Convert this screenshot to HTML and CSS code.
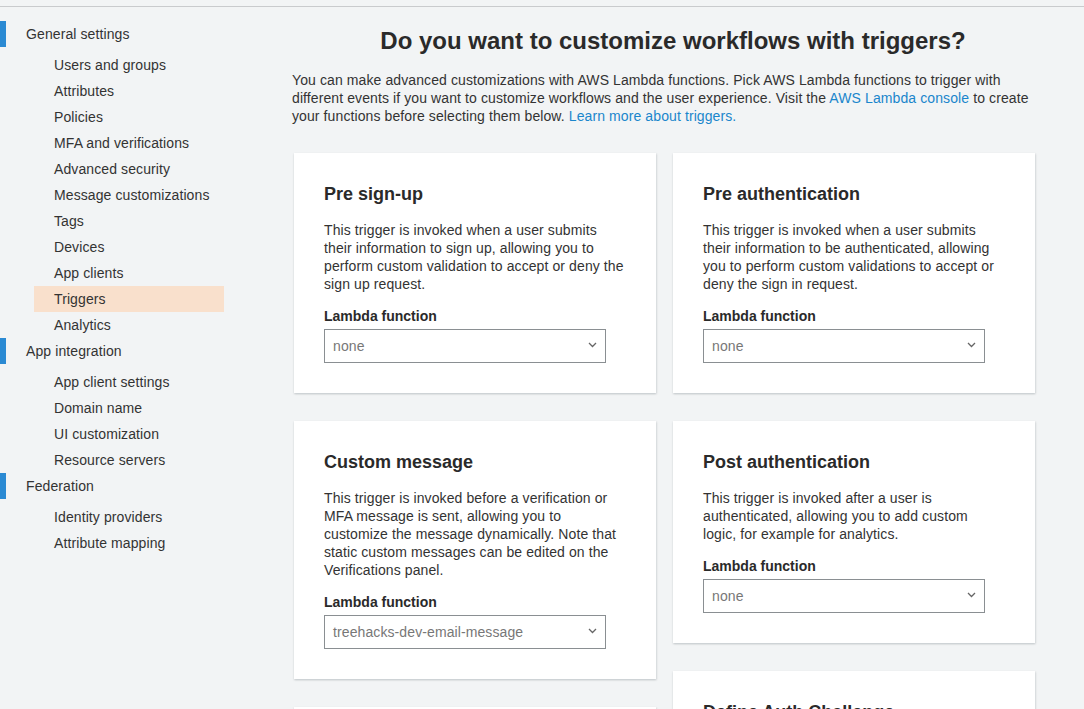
FILE: index.html
```html
<!DOCTYPE html>
<html lang="en">
<head>
<meta charset="utf-8">
<title>Triggers</title>
<link rel="stylesheet" href="styles.css">
</head>
<body>
<div class="topbar"></div>
<div class="layout">
  <nav class="sidebar">
    <div class="nav-section">General settings</div>
    <ul class="nav-list">
      <li class="nav-item">Users and groups</li>
      <li class="nav-item">Attributes</li>
      <li class="nav-item">Policies</li>
      <li class="nav-item">MFA and verifications</li>
      <li class="nav-item">Advanced security</li>
      <li class="nav-item">Message customizations</li>
      <li class="nav-item">Tags</li>
      <li class="nav-item">Devices</li>
      <li class="nav-item">App clients</li>
      <li class="nav-item active">Triggers</li>
      <li class="nav-item">Analytics</li>
    </ul>
    <div class="nav-section">App integration</div>
    <ul class="nav-list">
      <li class="nav-item">App client settings</li>
      <li class="nav-item">Domain name</li>
      <li class="nav-item">UI customization</li>
      <li class="nav-item">Resource servers</li>
    </ul>
    <div class="nav-section">Federation</div>
    <ul class="nav-list">
      <li class="nav-item">Identity providers</li>
      <li class="nav-item">Attribute mapping</li>
    </ul>
  </nav>
  <main class="main">
    <h1 class="title">Do you want to customize workflows with triggers?</h1>
    <p class="intro">You can make advanced customizations with AWS Lambda functions. Pick AWS Lambda functions to trigger with different events if you want to customize workflows and the user experience. Visit the <a href="#">AWS Lambda console</a> to create your functions before selecting them below. <a href="#">Learn more about triggers.</a></p>
    <div class="columns">
      <div class="column">
        <section class="card">
          <h2 class="card-title">Pre sign-up</h2>
          <p class="card-desc">This trigger is invoked when a user submits their information to sign up, allowing you to perform custom validation to accept or deny the sign up request.</p>
          <div class="field-label">Lambda function</div>
          <div class="select"><span>none</span><svg class="chev" width="9" height="6" viewBox="0 0 9 6"><path d="M1 1l3.5 3.5L8 1" fill="none" stroke="#666" stroke-width="1.3"/></svg></div>
        </section>
        <section class="card">
          <h2 class="card-title">Custom message</h2>
          <p class="card-desc">This trigger is invoked before a verification or MFA message is sent, allowing you to customize the message dynamically. Note that static custom messages can be edited on the Verifications panel.</p>
          <div class="field-label">Lambda function</div>
          <div class="select"><span>treehacks-dev-email-message</span><svg class="chev" width="9" height="6" viewBox="0 0 9 6"><path d="M1 1l3.5 3.5L8 1" fill="none" stroke="#666" stroke-width="1.3"/></svg></div>
        </section>
        <section class="card">
          <h2 class="card-title">Post confirmation</h2>
          <p class="card-desc">This trigger is invoked after a user is confirmed, allowing you to send custom messages or to add custom logic, for example for analytics.</p>
          <div class="field-label">Lambda function</div>
          <div class="select"><span>none</span><svg class="chev" width="9" height="6" viewBox="0 0 9 6"><path d="M1 1l3.5 3.5L8 1" fill="none" stroke="#666" stroke-width="1.3"/></svg></div>
        </section>
      </div>
      <div class="column">
        <section class="card">
          <h2 class="card-title">Pre authentication</h2>
          <p class="card-desc">This trigger is invoked when a user submits their information to be authenticated, allowing you to perform custom validations to accept or deny the sign in request.</p>
          <div class="field-label">Lambda function</div>
          <div class="select"><span>none</span><svg class="chev" width="9" height="6" viewBox="0 0 9 6"><path d="M1 1l3.5 3.5L8 1" fill="none" stroke="#666" stroke-width="1.3"/></svg></div>
        </section>
        <section class="card">
          <h2 class="card-title">Post authentication</h2>
          <p class="card-desc">This trigger is invoked after a user is authenticated, allowing you to add custom logic, for example for analytics.</p>
          <div class="field-label">Lambda function</div>
          <div class="select"><span>none</span><svg class="chev" width="9" height="6" viewBox="0 0 9 6"><path d="M1 1l3.5 3.5L8 1" fill="none" stroke="#666" stroke-width="1.3"/></svg></div>
        </section>
        <section class="card">
          <h2 class="card-title">Define Auth Challenge</h2>
          <p class="card-desc">This trigger is invoked to initiate the custom authentication flow.</p>
          <div class="field-label">Lambda function</div>
          <div class="select"><span>none</span><svg class="chev" width="9" height="6" viewBox="0 0 9 6"><path d="M1 1l3.5 3.5L8 1" fill="none" stroke="#666" stroke-width="1.3"/></svg></div>
        </section>
      </div>
    </div>
  </main>
</div>
</body>
</html>
```

FILE: styles.css
```css
* { box-sizing: border-box; }
html, body { margin: 0; padding: 0; }
body {
  background: #f2f4f5;
  font-family: "Liberation Sans", Arial, sans-serif;
  color: #333;
  font-size: 14px;
  letter-spacing: 0.1px;
}
.topbar {
  height: 7px;
  border-bottom: 1px solid #c9cbcd;
}
.layout {
  display: flex;
  align-items: flex-start;
}
.sidebar {
  width: 240px;
  flex: none;
  padding-top: 14px;
}
.nav-section {
  height: 26px;
  line-height: 26px;
  border-left: 6px solid #2b8ad3;
  padding-left: 20px;
  color: #333;
  margin-bottom: 5px;
}
.nav-list {
  list-style: none;
  margin: 0;
  padding: 0;
}
.nav-item {
  height: 26px;
  line-height: 26px;
  margin-left: 34px;
  width: 190px;
  padding-left: 20px;
  color: #333;
}
.nav-item.active {
  background: #f9e0cc;
}
.main {
  margin-left: 52px;
  width: 744px;
  padding-top: 19px;
}
.title {
  margin: 0;
  font-size: 24px;
  line-height: 30px;
  font-weight: bold;
  letter-spacing: 0;
  text-align: center;
  color: #2a2a2a;
  padding-left: 18px;
}
.intro {
  margin: 15px 0 0;
  line-height: 18px;
  color: #333;
}
.intro a {
  color: #1a86cc;
  text-decoration: none;
}
.columns {
  display: flex;
  gap: 17px;
  margin-top: 28px;
  padding-left: 2px;
}
.column {
  width: 362px;
  display: flex;
  flex-direction: column;
  gap: 28px;
}
.card {
  background: #fff;
  padding: 30px 30px 30px;
  box-shadow: 0 1px 2px rgba(0, 28, 36, 0.15), 1px 1px 2px rgba(0, 28, 36, 0.08);
}
.card-title {
  margin: 0;
  font-size: 18px;
  line-height: 22px;
  font-weight: bold;
  letter-spacing: 0;
  color: #2a2a2a;
}
.card-desc {
  margin: 16px 1px 0 0;
  line-height: 18px;
  color: #333;
}
.field-label {
  margin-top: 14px;
  font-weight: bold;
  line-height: 18px;
  letter-spacing: 0;
  color: #2a2a2a;
}
.select {
  margin-top: 4px;
  width: 282px;
  height: 34px;
  border: 1px solid #8a8f92;
  display: flex;
  align-items: center;
  justify-content: space-between;
  padding: 0 8px;
  color: #777;
  background: #fff;
}
.chev { display: block; margin-top: -2px; }
```
